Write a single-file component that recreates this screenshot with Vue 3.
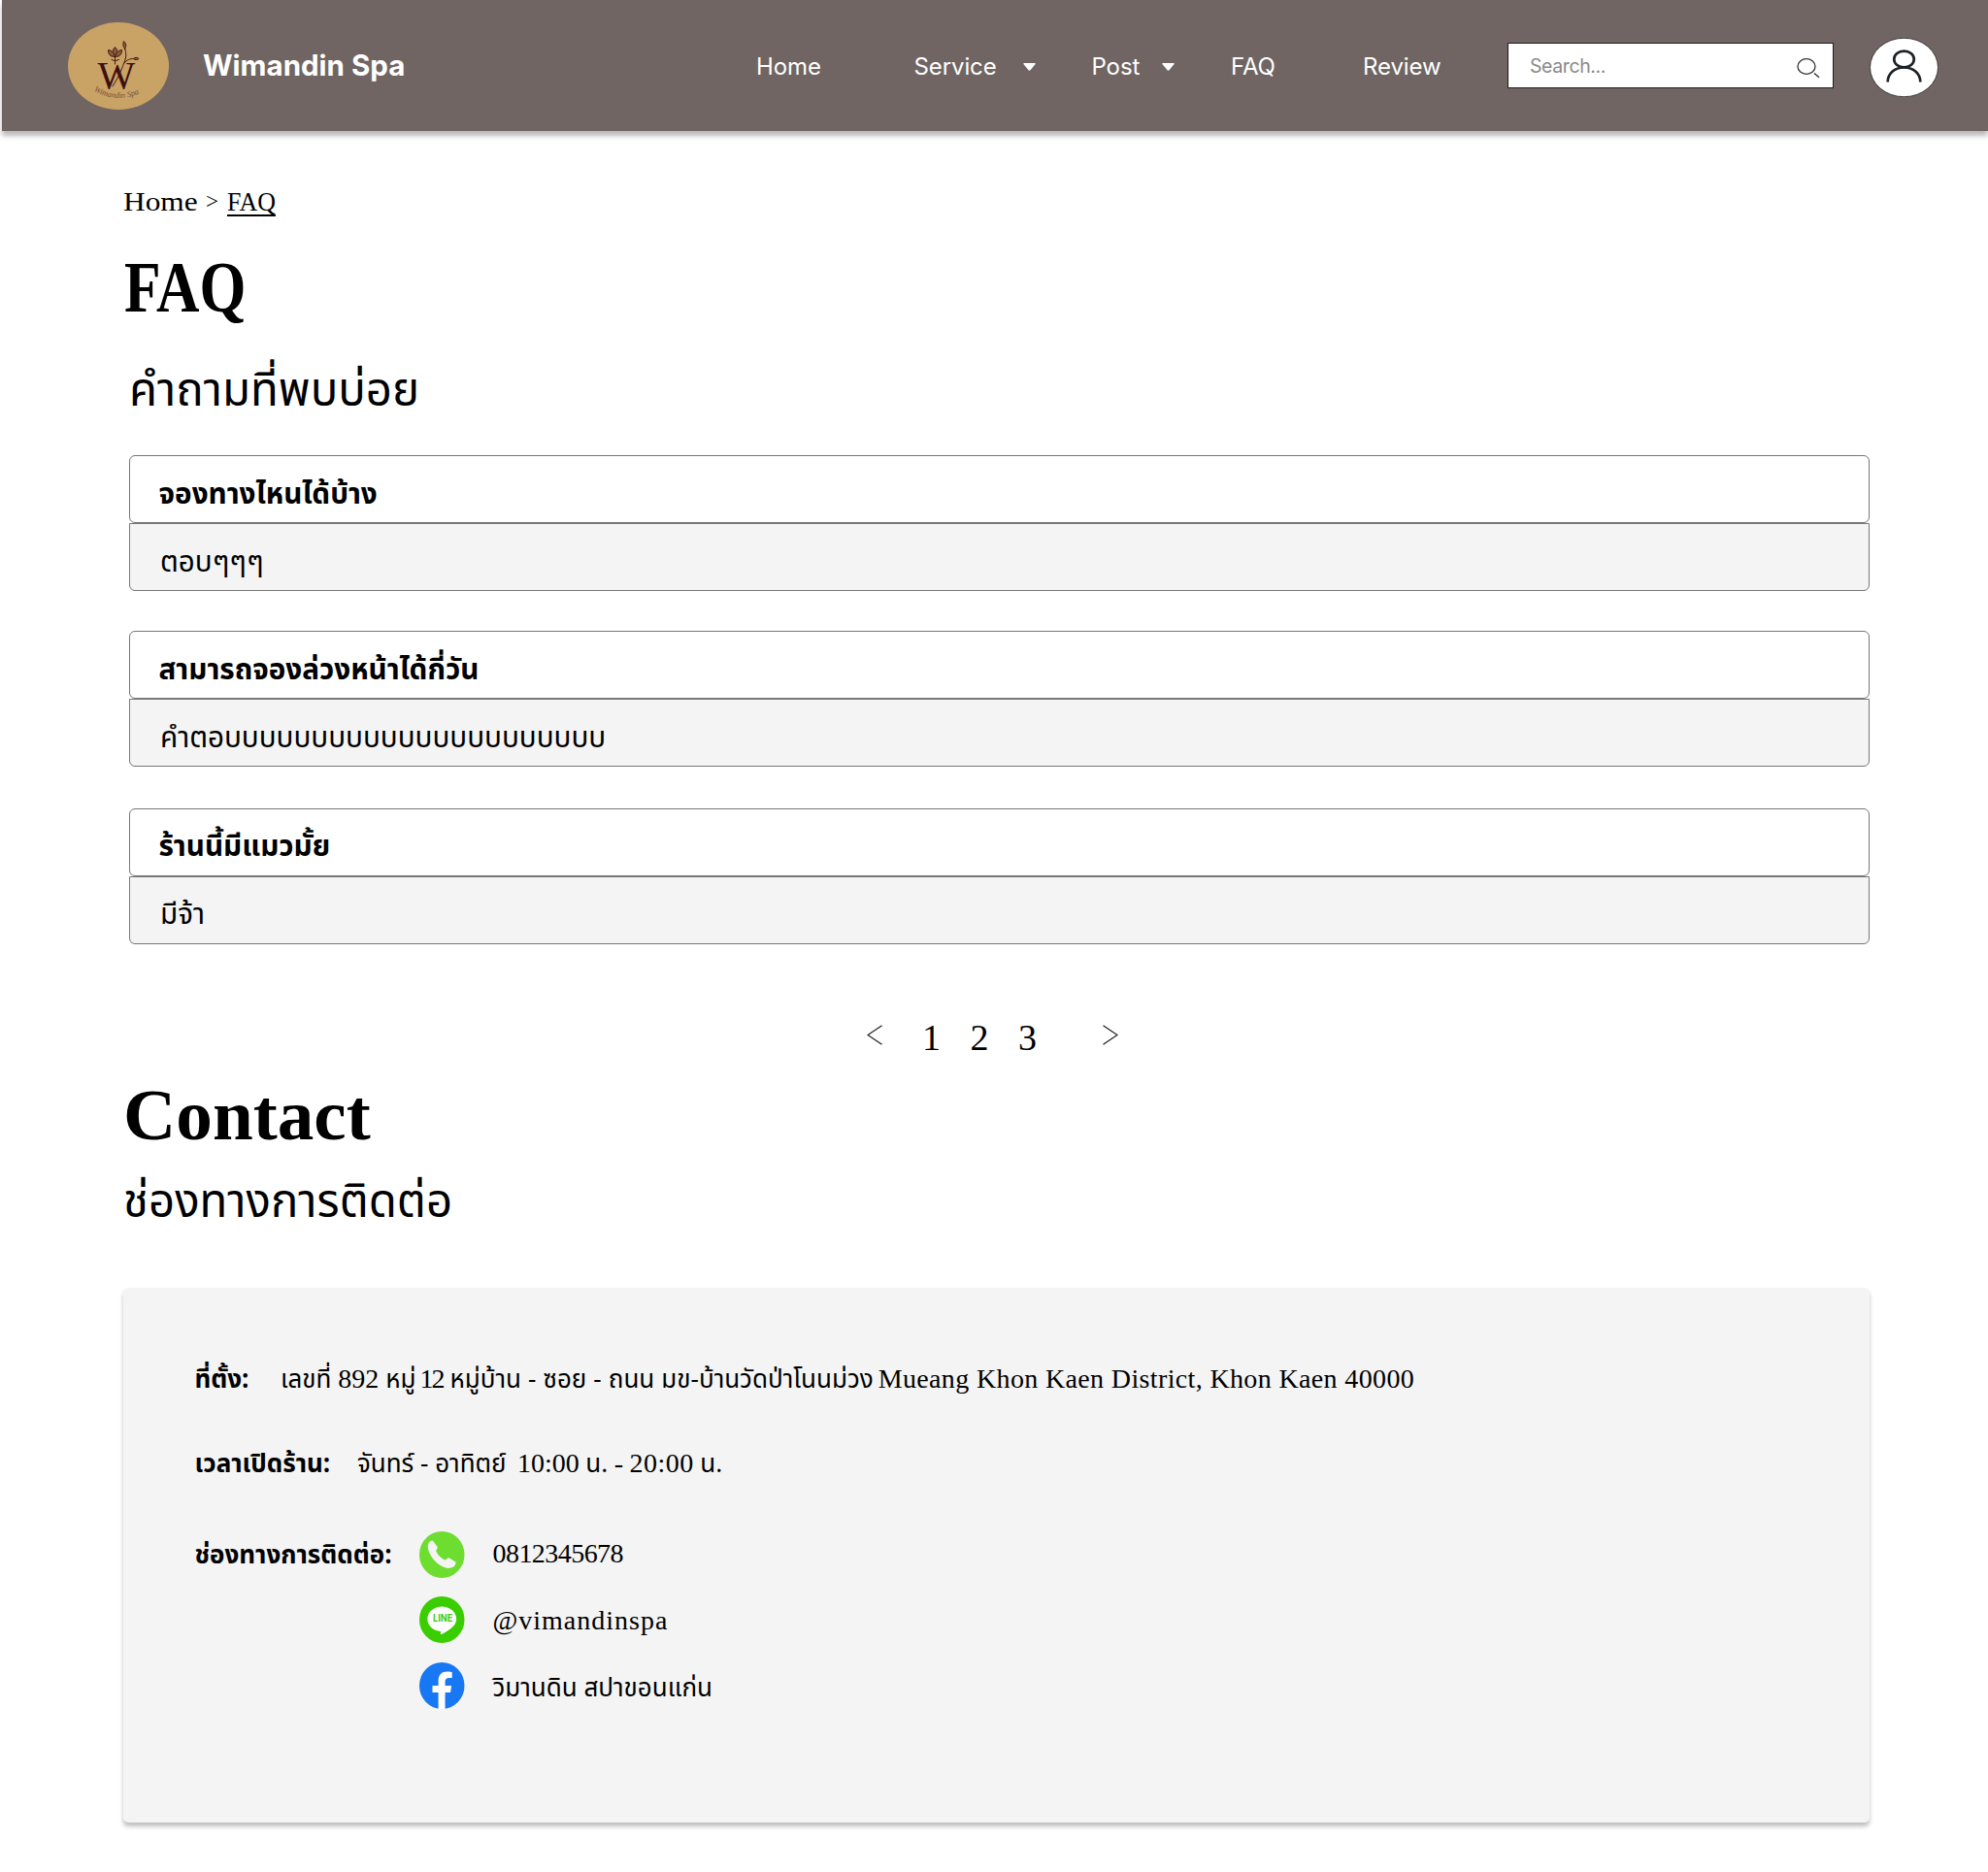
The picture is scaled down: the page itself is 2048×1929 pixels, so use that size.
<script setup>
const faqs = [
  { q: 'จองทางไหนได้บ้าง', a: 'ตอบๆๆๆ' },
  { q: 'สามารถจองล่วงหน้าได้กี่วัน', a: 'คำตอบบบบบบบบบบบบบบบบบบบบบบ' },
  { q: 'ร้านนี้มีแมวมั้ย', a: 'มีจ้า' },
]
const pages = [1, 2, 3]
</script>

<template>
  <div class="page">
    <header class="topbar">
      <svg class="logo" viewBox="0 0 104 90">
        <ellipse cx="52" cy="45" rx="52" ry="45" fill="#c9a266" />
        <text class="logo-w" x="30.5" y="68">W</text>
        <g fill="none" stroke="#4a1a14" stroke-width="1" stroke-linecap="round">
          <path d="M48.5 43V35M45 38.5l3.5 1.2 4-1.2" />
          <path d="M48.5 35.5c-3.2-3-3.2-6.5 0-10 3.2 3.5 3.2 7 0 10z" fill="#8a5a38" />
          <path d="M48 35.5c-5 0-6.5-3-6.5-7 4 .5 6.5 3 6.5 7z" fill="#8a5a38" />
          <path d="M49 35.5c5 0 6.5-3 6.5-7-4 .5-6.5 3-6.5 7z" fill="#8a5a38" />
          <path d="M46 66C52 57 56 47 58.5 40c1.5-4 2-8 .2-12.5" />
          <path d="M58 42c2.5-3.500 6-4.500 9.500-4.500" />
          <path d="M58.700 27.500c-2.500-3-2.200-5.500-1.200-8 2.500 2 3 5 1.200 8z" fill="#8a5a38" />
          <path d="M67.500 37.500c2-1.700 4-1.500 5.500 0-1.500 1.500-3.700 1.500-5.500 0z" fill="#8a5a38" />
        </g>
        <path id="logo-arc" d="M26.500 70.500Q49 84 75 73" fill="none" />
        <text class="logo-script"><textPath href="#logo-arc" textLength="49">Wimandin Spa</textPath></text>
      </svg>
      <div class="brand">Wimandin Spa</div>
      <a class="nav-item">Home</a>
      <a class="nav-item service">Service
        <svg class="caret" viewBox="0 0 13 8"><path d="M1 0h11q1 .3.6 1.100L7.500 7.300q-1 .9-2 0L.4 1.100Q0 .3 1 0z" fill="#fff" /></svg>
      </a>
      <a class="nav-item post">Post
        <svg class="caret" viewBox="0 0 13 8"><path d="M1 0h11q1 .3.6 1.100L7.500 7.300q-1 .9-2 0L.4 1.100Q0 .3 1 0z" fill="#fff" /></svg>
      </a>
      <a class="nav-item">FAQ</a>
      <a class="nav-item">Review</a>
      <div class="search">
        <span>Search...</span>
        <svg viewBox="0 0 26 22" width="26" height="22" fill="none" stroke="#333">
          <ellipse cx="11" cy="9.500" rx="9" ry="7.800" stroke-width="1.300" />
          <path d="M19 16.500l5 4.200" stroke-width="1.500" />
        </svg>
      </div>
      <svg class="avatar" viewBox="0 0 71 61">
        <ellipse cx="35.500" cy="30.500" rx="35" ry="30.200" fill="#fff" stroke="#222" stroke-width=".8" />
        <g fill="none" stroke="#1c2226" stroke-width="2.700">
          <ellipse cx="35.500" cy="22" rx="10.300" ry="8.400" />
          <path d="M18.700 45.500c0-8.500 7-15 16.800-15s16.800 6.500 16.800 15" />
        </g>
      </svg>
    </header>

    <main>
      <nav class="crumbs">
        <span class="crumb-home"><span>Home</span></span>
        <span class="crumb-sep">&gt;</span>
        <a class="crumb-current">FAQ</a>
      </nav>

      <h1><span class="narrow">FAQ</span></h1>
      <h2 class="indent">คำถามที่พบบ่อย</h2>

      <section class="faq-list">
        <article v-for="f in faqs" :key="f.q">
          <div class="question">{{ f.q }}</div>
          <div class="answer">{{ f.a }}</div>
        </article>
      </section>

      <nav class="pager">
        <svg viewBox="0 0 16 21"><path d="M15.500 .7L1 10.500l14.500 9.800" /></svg>
        <span v-for="p in pages" :key="p" class="page-no">{{ p }}</span>
        <svg class="next" viewBox="0 0 16 21"><path d="M.5 .7L15 10.500.5 20.300" /></svg>
      </nav>

      <h1 class="contact-title">Contact</h1>
      <h2 class="contact-sub">ช่องทางการติดต่อ</h2>

      <section class="card">
        <div class="row address">
          <b>ที่ตั้ง:</b>
          <span>เลขที่</span>
          <span class="latin">892</span>
          <span>หมู่</span>
          <span class="latin moo">12</span>
          <span class="village">หมู่บ้าน - ซอย - ถนน มข-บ้านวัดป่าโนนม่วง</span>
          <span class="latin district">Mueang Khon Kaen District, Khon Kaen 40000</span>
        </div>
        <div class="row hours">
          <b>เวลาเปิดร้าน:</b>
          <span class="days">จันทร์ - อาทิตย์</span>
          <span class="latin">10:00</span>
          <span>น.</span>
          <span class="latin">-</span>
          <span class="latin closing">20:00</span>
          <span>น.</span>
        </div>
        <div class="channels">
          <b>ช่องทางการติดต่อ:</b>
          <ul>
            <li>
              <svg viewBox="0 0 48 48" preserveAspectRatio="none">
                <circle cx="24" cy="24" r="24" fill="#6ddd30" />
                <path d="M10.200 11.500c1-1.500 2.700-2.300 4-2l5 6.500c.3 1.500-.5 2.700-1.600 3.700 1.500 4 5.500 8 10.200 10 1.200-1.500 2.500-2.700 4.200-2.300l6.500 4.200c1 1.500-.5 3.700-2.200 5-4 2.500-9.500 1.500-14.500-1.800C15 30 10.500 24 9.200 17.500c-.4-2.300-.2-4.300 1-6z" fill="#f4f4f4" />
              </svg>
              <span class="latin phone">0812345678</span>
            </li>
            <li>
              <svg viewBox="0 0 48 48" preserveAspectRatio="none">
                <circle cx="24" cy="24" r="24" fill="#3ace01" />
                <path d="M24 10.500c8.500 0 15.400 5.700 15.400 12.700 0 5-3.700 8.300-8 11.300-3 2-6 3.700-8 4.500-1.500.4-.6-1.500-.7-3C14.500 35.300 8.600 30 8.600 23.200c0-7 6.900-12.700 15.400-12.700z" fill="#fff" />
                <text class="line-word" x="14.500" y="26.500" textLength="21" lengthAdjust="spacingAndGlyphs">LINE</text>
              </svg>
              <span class="latin line-id">@vimandinspa</span>
            </li>
            <li>
              <svg viewBox="0 0 48 48" preserveAspectRatio="none">
                <circle cx="24" cy="24" r="24" fill="#1877f2" />
                <path d="M20.200 48V30.900H13.900V24h6.300v-4.500c0-6.700 3.600-9.900 9.300-9.900 2.600 0 5.300.5 5.300.5v5.900h-3c-3 0-4.400 1.700-4.400 3.700V24h6.800l-1.100 6.900h-5.700V48z" fill="#fff" />
              </svg>
              <span class="fb-name">วิมานดิน สปาขอนแก่น</span>
            </li>
          </ul>
        </div>
      </section>
    </main>
  </div>
</template>

<style>
body { margin: 0; background: #fff; }
</style>

<style scoped>
.page {
  width: 2048px;
  height: 1929px;
  overflow: hidden;
  color: #000;
  font-family: "Noto Sans Thai", "Noto Sans", sans-serif;
  white-space: nowrap;
}
.topbar {
  display: grid;
  grid-template-columns: 139px 570px 162.500px 183px 143.500px 136px 149px 372.500px 71px;
  align-items: center;
  height: 135px;
  margin-left: 2px;
  padding-left: 68px;
  box-sizing: border-box;
  background: #706562;
  box-shadow: 0 5px 5px rgba(0, 0, 0, 0.27);
  color: #fff;
  font-family: Inter, sans-serif;
}
.logo { width: 104px; height: 90px; margin-top: 1px; }
.logo-w { font: 41px "Liberation Serif", serif; fill: #3d100f; }
.logo-script { font: italic 8.500px "Liberation Serif", serif; fill: #7a5230; }
.brand { margin-top: -2px; font-size: 29.500px; font-weight: 700; }
.nav-item { display: flex; align-items: center; padding-top: 1px; font-size: 24px; font-weight: 370; letter-spacing: -.1px; }
.service { gap: 27.500px; }
.post { gap: 23px; }
.caret { width: 13px; height: 8px; margin-top: 1px; }
.search {
  display: flex;
  align-items: center;
  justify-content: space-between;
  width: 336px;
  height: 47px;
  padding: 0 12px 0 22px;
  box-sizing: border-box;
  border: 1.500px solid #1e1e1e;
  background: #fff;
  color: #8a8a8a;
  font-size: 19.500px;
  letter-spacing: -.4px;
}
.search svg { margin-top: 4px; }
.avatar { width: 71px; height: 61px; margin-top: 3px; }

main { padding: 53px 0 0 127px; }
.crumbs {
  display: flex;
  align-items: center;
  height: 40px;
  font: 28px/40px "Liberation Serif", serif;
}
.crumb-home { width: 85px; }
.crumb-home span { display: inline-block; transform: scaleX(1.12); transform-origin: left; }
.crumb-sep { width: 22px; font-size: 23px; }
.crumb-current {
  display: inline-block;
  transform: scaleX(.925);
  transform-origin: left;
  text-decoration: underline;
  text-decoration-thickness: 1.500px;
  text-decoration-skip-ink: none;
  text-underline-offset: 4px;
}
h1 { margin: 23px 0 0 1px; font: 700 74px/90px "Liberation Serif", serif; }
.narrow { display: inline-block; transform: scaleX(.832); transform-origin: left; }
h2 { margin: 28px 0 0; font-size: 47.300px; font-weight: 400; line-height: 70px; }
.indent { padding-left: 6px; }
.faq-list {
  display: flex;
  flex-direction: column;
  gap: 42px;
  width: 1793px;
  margin: 30px 0 0 6px;
}
.question, .answer {
  height: 70px;
  padding-top: 12px;
  box-sizing: border-box;
  border: 1px solid #777;
  line-height: 56px;
}
.question { padding-left: 29.500px; border-radius: 6px; font-size: 29.650px; font-weight: 700; }
.answer { padding-left: 31px; border-radius: 0 0 6px 6px; background: #f4f4f4; font-size: 29.600px; }
article:nth-child(2) { margin: -1px 0 1px; }
article:nth-child(3) .question,
article:nth-child(3) .answer { line-height: 54px; }
.pager {
  display: flex;
  align-items: center;
  height: 50px;
  margin: 71px 0 0 766px;
  font: 38px/50px "Liberation Serif", serif;
}
.pager svg { width: 16px; height: 21px; margin: 0 41px 5px 0; fill: none; stroke: #222; stroke-width: 1.300px; }
.pager .next { margin: 0 0 5px 37px; }
.page-no { width: 49.500px; }
.contact-title { margin: 10px 0 0; transform: scaleX(1.016); transform-origin: left; }
.contact-sub { margin-top: 11px; }

.card {
  width: 1799px;
  height: 551px;
  margin-top: 52px;
  padding: 74px 0 0 73.500px;
  box-sizing: border-box;
  border-radius: 5px;
  background: #f4f4f4;
  box-shadow: 0 4px 4px rgba(0, 0, 0, .25);
  font-size: 26px;
  line-height: 40px;
}
.latin { font-family: "Liberation Serif", serif; font-size: 28px; }
.row { display: flex; align-items: baseline; height: 41px; }
.address { gap: 7px; }
.address b { width: 81.500px; }
.moo { margin-left: -3px; letter-spacing: -2px; }
.village { margin-left: 0; word-spacing: .3px; }
.district { margin-left: -2px; letter-spacing: .36px; }
.hours { gap: 6.500px; margin-top: 46px; }
.hours b { width: 161px; }
.days { margin-right: 5px; }
.closing { letter-spacing: .5px; }
.channels { display: flex; margin-top: 39px; }
.channels b { width: 231.500px; padding-top: 15px; }
ul { margin: 0; padding: 0; list-style: none; }
li { display: flex; align-items: center; gap: 29px; height: 67.500px; }
li svg { width: 46.500px; height: 48px; }
.line-word { font: 700 10.500px Inter, sans-serif; fill: #3ace01; }
.phone { margin-top: -1px; letter-spacing: -.55px; }
.line-id { padding-top: 2px; letter-spacing: 1px; }
.fb-name { padding-top: 6px; }
</style>
